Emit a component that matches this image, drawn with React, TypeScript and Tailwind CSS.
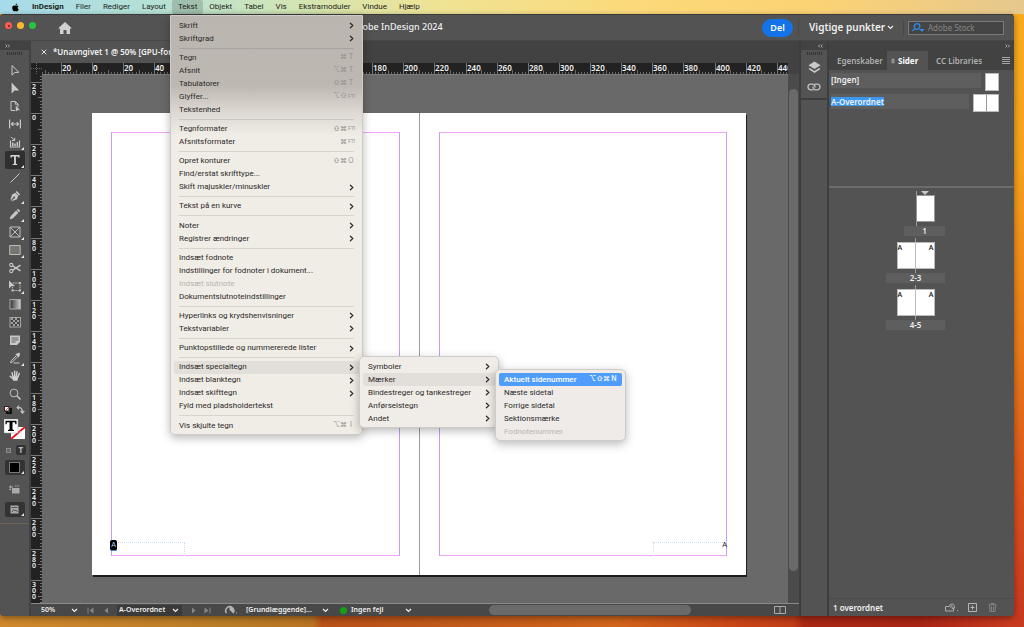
import React from "react";
import { FaApple } from "react-icons/fa";

/* ---------- data ---------- */

type Item = { label: string; mods?: string; keyName?: string; sub?: boolean; disabled?: boolean; active?: boolean; selected?: boolean };

const menuBar = ["Filer", "Rediger", "Layout", "Tekst", "Objekt", "Tabel", "Vis", "Ekstramoduler", "Vindue", "Hjælp"];

const textMenu: Item[][] = [
  [{ label: "Skrift", sub: true }, { label: "Skriftgrad", sub: true }],
  [
    { label: "Tegn", mods: "⌘", keyName: "T" },
    { label: "Afsnit", mods: "⌥⌘", keyName: "T" },
    { label: "Tabulatorer", mods: "⇧⌘", keyName: "T" },
    { label: "Glyffer...", mods: "⌥⇧", keyName: "F11" },
    { label: "Tekstenhed" },
  ],
  [
    { label: "Tegnformater", mods: "⇧⌘", keyName: "F11" },
    { label: "Afsnitsformater", mods: "⌘", keyName: "F11" },
  ],
  [
    { label: "Opret konturer", mods: "⇧⌘", keyName: "O" },
    { label: "Find/erstat skrifttype..." },
    { label: "Skift majuskler/minuskler", sub: true },
  ],
  [{ label: "Tekst på en kurve", sub: true }],
  [{ label: "Noter", sub: true }, { label: "Registrer ændringer", sub: true }],
  [
    { label: "Indsæt fodnote" },
    { label: "Indstillinger for fodnoter i dokument..." },
    { label: "Indsæt slutnote", disabled: true },
    { label: "Dokumentslutnoteindstillinger" },
  ],
  [{ label: "Hyperlinks og krydshenvisninger", sub: true }, { label: "Tekstvariabler", sub: true }],
  [{ label: "Punktopstillede og nummererede lister", sub: true }],
  [
    { label: "Indsæt specialtegn", sub: true, active: true },
    { label: "Indsæt blanktegn", sub: true },
    { label: "Indsæt skifttegn", sub: true },
    { label: "Fyld med pladsholdertekst" },
  ],
  [{ label: "Vis skjulte tegn", mods: "⌥⌘", keyName: "I" }],
];

const specialMenu: Item[][] = [
  [
    { label: "Symboler", sub: true },
    { label: "Mærker", sub: true, active: true },
    { label: "Bindestreger og tankestreger", sub: true },
    { label: "Anførselstegn", sub: true },
    { label: "Andet", sub: true },
  ],
];

const markerMenu: Item[][] = [
  [
    { label: "Aktuelt sidenummer", mods: "⌥⇧⌘", keyName: "N", selected: true },
    { label: "Næste sidetal" },
    { label: "Forrige sidetal" },
    { label: "Sektionsmærke" },
    { label: "Fodnotenummer", disabled: true },
  ],
];

/* ---------- small shared pieces ---------- */

function Chevron({ className = "" }: { className?: string }) {
  return (
    <svg className={`h-[5px] w-[7px] shrink-0 ${className}`} viewBox="0 0 7 5" fill="none" stroke="currentColor" strokeWidth="1.2">
      <path d="M1 1l2.5 2.5L6 1" />
    </svg>
  );
}

function DoubleChevron({ flip }: { flip?: boolean }) {
  return (
    <svg className={`h-[4px] w-[5px] ${flip ? "rotate-180" : ""}`} viewBox="0 0 5 4" fill="none" stroke="#bdbdbd" strokeWidth=".8" aria-hidden="true">
      <path d="M.5.500L2 2 .5 3.500M3 .500L4.500 2 3 3.500" />
    </svg>
  );
}

function MenuRow({ item }: { item: Item }) {
  const tone = item.selected
    ? "bg-[#4f9dfa] text-white font-medium"
    : item.disabled
      ? "text-[#b9b5b0]"
      : item.active
        ? "bg-[#e2deda] text-[#2c2a28]"
        : "text-[#2c2a28]";
  return (
    <li role="none" className="flex">
      <button
        role="menuitem"
        disabled={item.disabled}
        aria-haspopup={item.sub ? "menu" : undefined}
        className={`flex h-[13px] flex-1 items-center rounded-[2px] px-[5px] text-left whitespace-nowrap ${tone}`}
      >
        <span className="flex-1">{item.label}</span>
        {item.mods && (
          <span className={`flex items-center font-['Inter',sans-serif] ${item.selected ? "text-white" : "text-[#96918b]"}`}>
            {[...item.mods].map((m) => (
              <span key={m} className="w-[7px] text-center text-[7px]">{m}</span>
            ))}
            <span className={`w-[7px] pl-[1px] ${item.keyName === "F11" ? "text-[5px]" : "text-center text-[7px]"}`}>{item.keyName}</span>
          </span>
        )}
        {item.sub && (
          <svg className="h-[7px] w-[5px]" viewBox="0 0 5 7" fill="none" stroke="currentColor" strokeWidth="1.2" strokeLinecap="round">
            <path d="M1.400 1.200l2.400 2.300-2.400 2.300" />
          </svg>
        )}
      </button>
    </li>
  );
}

function Menu({ groups, className, label }: { groups: Item[][]; className: string; label: string }) {
  return (
    <ul role="menu" aria-label={label} className={`absolute flex flex-col border border-[#cfcbc6] px-[3px] pt-[3px] pb-[2px] font-['Roboto',sans-serif] text-[8px] shadow-[0_3px_10px_rgba(0,0,0,0.28)] ${className}`}>
      {groups.map((g, i) => (
        <React.Fragment key={i}>
          {i > 0 && (
            <li role="separator" className="mx-[5px] flex flex-1 items-center">
              <span className="h-px flex-1 bg-black/10" />
            </li>
          )}
          {g.map((it) => (
            <MenuRow key={it.label} item={it} />
          ))}
        </React.Fragment>
      ))}
    </ul>
  );
}

function Select({ label, value, className }: { label: string; value: string; className: string }) {
  return (
    <label className="flex items-center">
      <span className="sr-only">{label}</span>
      <select className={`appearance-none truncate bg-transparent outline-none ${className}`}>
        <option>{value}</option>
      </select>
      <Chevron />
    </label>
  );
}

/* ---------- rulers ---------- */

const STEP = 31.13;

function HorizontalRuler() {
  const marks = Array.from({ length: 25 }, (_, i) => i - 2);
  return (
    <svg className="h-[11px] min-w-0 flex-1 bg-[#222]" aria-hidden="true">
      {marks.map((m) => {
        const x = Math.round(50 + m * STEP);
        return (
          <g key={m}>
            <rect x={x} y="0" width="1" height="11" fill="#777" />
            {Array.from({ length: 9 }, (_, k) => {
              const h = k === 4 ? 4 : 2;
              return <rect key={k} x={Math.round(50 + m * STEP + (k + 1) * 3.113)} y={11 - h} width="1" height={h} fill="#666" />;
            })}
            {m > -2 && (
              <text x={x + 1} y="8" fill="#f0f0f0" fontSize="8" fontWeight="600" fontFamily="Noto Sans, sans-serif">
                {Math.abs(m * 20)}
              </text>
            )}
          </g>
        );
      })}
    </svg>
  );
}

function VerticalRuler() {
  const marks = Array.from({ length: 18 }, (_, i) => i - 2);
  return (
    <svg className="h-full w-[11px] shrink-0 bg-[#222]" aria-hidden="true">
      {marks.map((m) => {
        const y = Math.round(39 + m * STEP);
        return (
          <g key={m}>
            <rect x="0" y={y} width="11" height="1" fill="#777" />
            {Array.from({ length: 9 }, (_, k) => {
              const w = k === 4 ? 4 : 2;
              return <rect key={k} x={11 - w} y={Math.round(39 + m * STEP + (k + 1) * 3.113)} width={w} height="1" fill="#777" />;
            })}
            {m > -2 &&
              String(Math.abs(m * 20)).split("").map((d, k) => (
                <text key={k} x="1" y={y + 7 + k * 6} fill="#f0f0f0" fontSize="7" fontWeight="600" fontFamily="Noto Sans, sans-serif">
                  {d}
                </text>
              ))}
          </g>
        );
      })}
    </svg>
  );
}

/* ---------- tools ---------- */

const tools: { name: string; more?: boolean; active?: boolean; art: React.ReactNode }[] = [
  { name: "Markering", art: <path d="M3 1.5v9.6l2.7-2.6 4.2-.2z" fill="none" stroke="#c8c8c8" /> },
  { name: "Direkte markering", art: <path d="M2.6.6v11l3-3 4.6-.2z" fill="#c8c8c8" /> },
  {
    name: "Side",
    art: (
      <g>
        <path d="M6 10.5H2v-9h4.5L9 4v3M6.3 1.5V4.200H9" fill="none" stroke="#c8c8c8" />
        <path d="M6.800 5.500v6.300l1.600-1.500 2.600-.1z" fill="#c8c8c8" />
      </g>
    ),
  },
  {
    name: "Mellemrum",
    art: <path d="M.6 1.500v9M11.400 1.500v9M2.500 6h7M4.300 4.200L2.500 6l1.800 1.800M7.700 4.200L9.500 6 7.700 7.800" fill="none" stroke="#c8c8c8" strokeWidth="1.200" />,
  },
  {
    name: "Indholdssamler",
    more: true,
    art: (
      <g>
        <path d="M1.500 4.500v6.500h9V4.500" fill="none" stroke="#c8c8c8" strokeWidth="1.200" />
        <path d="M3 6.500h1.500v3.500H3zM5.300 7.500h1.500V10H5.300zM7.600 6h1.500v4H7.600z" fill="#c8c8c8" />
        <path d="M2 .8l3.500 3.500M5.700 1.800v2.700H3" fill="none" stroke="#c8c8c8" />
      </g>
    ),
  },
  { name: "Tekst", more: true, active: true, art: <path d="M1.500 1h9v2.700h-1l-.4-1.300H6.900v7.400l1.400.4v.8H3.700v-.8l1.400-.4V2.400H2.900l-.4 1.300h-1z" fill="#d8d8d8" /> },
  { name: "Streg", art: <path d="M1.500 10.500l9-9" stroke="#c8c8c8" /> },
  {
    name: "Pen",
    more: true,
    art: <path d="M7.500.800l3.700 3.700-1.300.9-3-3zM6.200 2.700l3.100 3.100-1.400 3.400-6 2.200 3-3a1 1 0 10-.7-.7l-3 3 1.800-6z" fill="#c8c8c8" />,
  },
  { name: "Blyant", more: true, art: <path d="M9 .8l2.200 2.200-1.200 1.200L7.800 2zM7.200 2.600l2.200 2.200-5.700 5.600-2.900.8.800-2.900z" fill="#c8c8c8" /> },
  { name: "Rektangelramme", more: true, art: <path d="M1 1h10v10H1zM1 1l10 10M11 1L1 11" fill="none" stroke="#bdbdbd" /> },
  { name: "Rektangel", more: true, art: <path d="M.7 1.500h10.500v9H.7z" fill="#777571" stroke="#bdbdbd" /> },
  {
    name: "Saks",
    art: (
      <g fill="none" stroke="#c8c8c8" strokeWidth="1.100">
        <circle cx="2.300" cy="3" r="1.600" />
        <circle cx="2.300" cy="9" r="1.600" />
        <path d="M3.700 3.900L11.500 8.800M3.700 8.100L11.500 3.200" strokeWidth="1.400" />
      </g>
    ),
  },
  {
    name: "Fri transformering",
    more: true,
    art: (
      <g>
        <path d="M4 3h7v7.500H3.500V7" fill="none" stroke="#bdbdbd" strokeDasharray="1.500 .7" />
        <path d="M10 2h2v2h-2zM10 9.500h2v2h-2zM2.500 9.500h2v2h-2z" fill="#bdbdbd" />
        <path d="M0 .5v8l2.400-2.200 3.600-.2z" fill="#c8c8c8" />
      </g>
    ),
  },
  {
    name: "Farveforløb",
    art: (
      <g>
        <defs>
          <linearGradient id="grad">
            <stop offset="0" stopColor="#333" />
            <stop offset="1" stopColor="#d0d0d0" />
          </linearGradient>
        </defs>
        <rect x="1" y="1.500" width="10.500" height="9.500" fill="url(#grad)" stroke="#a8a8a8" />
      </g>
    ),
  },
  {
    name: "Farveforløbsudtyndning",
    art: (
      <g>
        <rect x="1" y="1.500" width="10.500" height="9.500" fill="#444" stroke="#a8a8a8" />
        <path d="M2 2h2v2H2zM6 2h2v2H6zM4 4h2v2H4zM8 4h2v2H8zM2 6h2v2H2zM6 6h2v2H6zM4 8h2v2H4zM8 8h2v2H8z" fill="#a0a0a0" />
      </g>
    ),
  },
  {
    name: "Note",
    art: (
      <g>
        <path d="M1 1.500h10v6.500L8 11H1z" fill="#c8c8c8" />
        <path d="M2.500 4h7M2.500 6h7M2.500 8h4" stroke="#5a5a5a" strokeWidth=".9" />
      </g>
    ),
  },
  {
    name: "Pipette",
    more: true,
    art: (
      <g>
        <path d="M8 1.800c1-1.200 2-1.300 2.700-.6s.6 1.700-.6 2.700l.4.500-1 1-3-3 1-1z" fill="#c8c8c8" />
        <path d="M7 4L2.200 8.800 1.500 10.700l2-.7L8.200 5.200" fill="none" stroke="#c8c8c8" />
        <path d="M4.500 11h6" stroke="#c8c8c8" />
      </g>
    ),
  },
  {
    name: "Hånd",
    art: (
      <g fill="none" stroke="#d0d0d0" strokeLinecap="round" strokeWidth="1.400">
        <path d="M4 6.500L3 2.800M5.700 6V1.300M7.400 6L8 1.800M8.800 7l1.500-3.500M3.500 8.500L1.200 6.300" />
        <path d="M4.500 7l3.700.2-.5 2.600H5z" fill="#d0d0d0" strokeWidth="2" />
      </g>
    ),
  },
  {
    name: "Zoom",
    art: (
      <g fill="none" stroke="#bdbdbd">
        <circle cx="5" cy="5" r="3.900" />
        <path d="M7.800 7.800l3.700 3.700" strokeWidth="1.600" />
      </g>
    ),
  },
];

function Corner() {
  return (
    <svg className="absolute right-[1px] bottom-[1px] h-[3px] w-[3px]" viewBox="0 0 3 3" aria-hidden="true">
      <path d="M3 0v3H0z" fill="#e8e8e8" />
    </svg>
  );
}

function Toolbar() {
  return (
    <aside className="flex w-[31px] shrink-0 flex-col border-r-2 border-[#424242] bg-[#535353]">
      <div className="flex h-[9px] items-center bg-[#424242] pl-[5px]"><DoubleChevron /></div>
      <Grip className="mx-[7px] mt-[2px]" />
      <div className="mt-[6px] flex flex-col items-center">
        {tools.map((t) => (
          <button
            key={t.name}
            aria-label={t.name}
            className={`relative flex h-[18px] w-[20px] items-center justify-center rounded-[2px] ${t.active ? "bg-[#2f2f2f]" : ""}`}
          >
            <svg className="h-[12px] w-[12px]" viewBox="0 0 12 12">{t.art}</svg>
            {t.more && <Corner />}
          </button>
        ))}
      </div>
      <div className="flex items-center justify-between px-[4px] pt-[2px]">
        <button aria-label="Standardudfyldning og -streg">
          <svg className="h-[8px] w-[8px]" viewBox="0 0 8 8">
            <rect x="3" y="3" width="4" height="4" fill="none" stroke="#111" strokeWidth="2" />
            <rect x=".5" y=".5" width="4.500" height="4.500" fill="#fff" stroke="#222" />
            <path d="M1 5l4-4" stroke="#e33" strokeWidth=".8" />
          </svg>
        </button>
        <button aria-label="Byt udfyldning og streg">
          <svg className="h-[9px] w-[9px]" viewBox="0 0 9 9" fill="none" stroke="#c0c0c0" strokeWidth="1.200">
            <path d="M1.500 2.500c3-.5 5 1 5 5M3 .6L1.200 2.500 3 4.200M4.700 6l1.800 2L8.300 6" />
          </svg>
        </button>
      </div>
      <button aria-label="Udfyldning og streg" className="mt-[5px] ml-[4px]">
        <svg className="h-[21px] w-[22px]" viewBox="0 0 22 21">
          <rect x="7" y="8" width="14" height="12" fill="#fff" />
          <path d="M7 20L21 8" stroke="#e8121c" strokeWidth="1.800" />
          <path d="M13 18l4-6v6" fill="none" stroke="#ddd" strokeWidth=".6" />
          <rect x="0" y="0" width="14" height="14" fill="#fff" stroke="#999" strokeWidth=".5" />
          <path d="M1.500 1.800h11v3.500h-1l-.6-2H8.500v7.200l1.500.5v1H4v-1l1.500-.5V3.300H3.100l-.6 2h-1z" fill="#000" />
        </svg>
      </button>
      <div className="mt-[5px] flex justify-around px-[2px]">
        <button aria-label="Formatering påvirker beholder" className="flex h-[10px] w-[10px] items-center justify-center">
          <span className="h-[5px] w-[5px] border border-[#8a8a8a] bg-[#666]" />
        </button>
        <button aria-label="Formatering påvirker tekst" className="flex h-[10px] w-[10px] items-center justify-center rounded-[2px] bg-[#333] font-['Noto_Sans',sans-serif] text-[8px] leading-none font-bold text-[#bbb]">T</button>
      </div>
      <button aria-label="Anvend farve" className="relative mx-auto mt-[5px] flex h-[15px] w-[20px] items-center justify-center rounded-[2px] bg-[#333]">
        <span className="h-[11px] w-[11px] border border-[#777] bg-black" />
        <Corner />
      </button>
      <button aria-label="Visningsindstillinger" className="mx-auto mt-[10px]">
        <svg className="h-[9px] w-[11px]" viewBox="0 0 11 9">
          <path d="M0 2h4M1.500.500v3M0 4.500h2M6 1h1.500M8.500 1h1.500" stroke="#aaa" />
          <rect x="3" y="3" width="7.500" height="5.500" fill="#aaa" />
        </svg>
      </button>
      <button aria-label="Skærmtilstand" className="relative mx-auto mt-[8px] flex h-[15px] w-[20px] items-center justify-center rounded-[2px] bg-[#333]">
        <svg className="h-[9px] w-[9px]" viewBox="0 0 9 9">
          <rect x=".5" y=".5" width="8" height="8" fill="#aaa" />
          <path d="M1.500 2.500h6M2 7l1.500-2.500L5 6l1-1 1.500 2" fill="none" stroke="#4a4a4a" strokeWidth=".9" />
        </svg>
        <Corner />
      </button>
      <div className="mt-[6px] h-px bg-[#6e665c]" />
    </aside>
  );
}

function Grip({ className }: { className: string }) {
  return <div className={`h-[3px] bg-[repeating-linear-gradient(90deg,#333_0_1px,#535353_1px_2px)] ${className}`} />;
}

/* ---------- document ---------- */

function Page({ side }: { side: "left" | "right" }) {
  const left = side === "left";
  return (
    <div className={`flex-1 bg-white px-[19px] py-[19px] ${left ? "border-r border-[#9b9b9b]" : ""}`}>
      <div className="relative h-full border border-x-[#c69df0] border-y-[#f2a5f5]">
        <div className={`absolute bottom-[-1px] h-[14px] w-[74px] border border-b-0 border-dotted border-[#ccdcf4] ${left ? "left-[-1px] border-l-0" : "right-[-1px] border-r-0"}`} />
        {left ? (
          <span className="absolute bottom-[4px] left-[-2px] flex h-[11px] w-[7px] items-center justify-center rounded-[2px] border-b border-[#3a8ee6] bg-black font-['Liberation_Sans',sans-serif] text-[7px] text-[#a8d4ff]">A</span>
        ) : (
          <span className="absolute right-[-1px] bottom-[5px] font-['Liberation_Sans',sans-serif] text-[7px] leading-[10px] text-[#222]">A</span>
        )}
      </div>
    </div>
  );
}

function StatusBar() {
  const nav = "h-[7px] w-[7px]";
  return (
    <footer className="flex h-[13px] shrink-0 items-center border-t border-[#8a8a8a] bg-[#484848] text-[7px] font-semibold text-[#f0f0f0]">
      <div className="flex flex-1 items-center">
        <div className="flex w-[49px] pl-[10px]">
          <Select label="Zoom" value="50%" className="w-[30px]" />
        </div>
        <div className="ml-[7px] flex flex-1 items-center">
          <button aria-label="Første side" className="w-[16px]">
            <svg className={nav} viewBox="0 0 7 7" fill="#858585"><path d="M.5.500h1v6h-1zM6.500.500v6L2.500 3.500z" /></svg>
          </button>
          <button aria-label="Forrige side" className="w-[14px]">
            <svg className={nav} viewBox="0 0 7 7" fill="#858585"><path d="M5 .500v6L1.500 3.500z" /></svg>
          </button>
          <div className="flex h-[11px] w-[65px] items-center bg-[#3a3a3a] pl-[2px]">
            <Select label="Side" value="A-Overordnet" className="w-[53px]" />
          </div>
          <button aria-label="Næste side" className="ml-[8px] w-[14px]">
            <svg className={nav} viewBox="0 0 7 7" fill="#858585"><path d="M2 .500v6l3.500-3z" /></svg>
          </button>
          <button aria-label="Sidste side" className="w-[20px]">
            <svg className={nav} viewBox="0 0 7 7" fill="#858585"><path d="M5.500.500h1v6h-1zM.5.500v6l4-3z" /></svg>
          </button>
          <svg className="h-[10px] w-[14px]" viewBox="0 0 14 10">
            <path d="M2.500 8A4 4 0 119 8" fill="none" stroke="#b5b5b5" strokeWidth="1.500" />
            <path d="M5.500 5V1.500A4 4 0 019 8z" fill="#b5b5b5" />
            <path d="M12 8h1" stroke="#b5b5b5" />
          </svg>
          <div className="ml-[8px]">
            <Select label="Preflightprofil" value="[Grundlæggende]..." className="w-[76px]" />
          </div>
          <span className="ml-[11px] h-[7px] w-[7px] rounded-full bg-[#14a014]" />
          <div className="ml-[4px]">
            <Select label="Preflight" value="Ingen fejl" className="w-[54px]" />
          </div>
        </div>
      </div>
      <div className="flex h-full w-[285px] items-center">
        <div className="h-[10px] w-[202px] rounded-full bg-[#6a6a6a]" />
      </div>
      <button aria-label="Opdel layoutvisning" className="mr-[13px]">
        <svg className="h-[8px] w-[12px]" viewBox="0 0 12 8" fill="none" stroke="#aaa"><path d="M.5.500h11v7H.500zM6 .500v7" /></svg>
      </button>
    </footer>
  );
}

function DocumentArea() {
  return (
    <main className="flex min-w-0 flex-1 flex-col bg-[#424242]">
      <div className="flex h-[22px] shrink-0">
        <div className="flex items-center gap-[6px] bg-[#535353] pr-[12px] pl-[10px] text-[8px] font-semibold text-[#f2f2f2]">
          <button aria-label="Luk dokument">
            <svg className="h-[6px] w-[6px]" viewBox="0 0 6 6" stroke="#ddd"><path d="M.7.700l4.600 4.600M5.300.700L.7 5.300" /></svg>
          </button>
          <span className="whitespace-nowrap">*Unavngivet 1 @ 50% [GPU-forhåndsvisning]</span>
        </div>
      </div>
      <div className="flex h-[11px] shrink-0">
        <svg className="h-[11px] w-[11px] bg-[#222]" viewBox="0 0 11 11" stroke="#666" strokeDasharray="1 1"><path d="M0 5.500h11M5.500 0v11" /></svg>
        <HorizontalRuler />
        <div className="w-[11px]" />
      </div>
      <div className="flex min-h-0 flex-1">
        <VerticalRuler />
        <div className="min-w-0 flex-1 overflow-hidden border-t border-[#7a7a7a] bg-[#696969] pt-[38px] pl-[50px]">
          <div className="flex h-[462px] w-[654px] shadow-[1px_2px_0_#1c1c1c]">
            <Page side="left" />
            <Page side="right" />
          </div>
        </div>
        <div className="w-[11px] bg-[#4b4b4b] px-[1px] pt-[15px]">
          <div className="h-[482px] rounded-full bg-[#6a6a6a]" />
        </div>
      </div>
      <StatusBar />
    </main>
  );
}

/* ---------- right-hand panels ---------- */

function Dock() {
  return (
    <nav aria-label="Paneler" className="flex w-[30px] shrink-0 flex-col border-x-2 border-[#3e3e3e] bg-[#535353]">
      <div className="flex h-[9px] items-center justify-end bg-[#424242] pr-[4px]"><DoubleChevron flip /></div>
      <div className="flex flex-col items-center border-b-2 border-[#3e3e3e] pb-[7px]">
        <Grip className="mt-[2px] w-[15px]" />
        <button aria-label="Lag" className="mt-[6px]">
          <svg className="h-[13px] w-[13px]" viewBox="0 0 13 13" fill="#c8c8c8">
            <path d="M6.500.500l6 3.700-6 3.700-6-3.700z" />
            <path d="M1.800 7L.5 8l6 4 6-4-1.300-1-4.700 3z" />
          </svg>
        </button>
        <button aria-label="Kæder" className="mt-[9px]">
          <svg className="h-[8px] w-[14px]" viewBox="0 0 14 8" fill="none" stroke="#c0c0c0" strokeWidth="1.300" strokeLinecap="round">
            <path d="M6 6.800H3.800a2.800 2.800 0 010-5.600h1.400a2.800 2.800 0 012.800 2.800" />
            <path d="M8 1.200h2.200a2.800 2.800 0 010 5.600H8.800A2.800 2.800 0 016 4" />
          </svg>
        </button>
      </div>
    </nav>
  );
}

function Spread({ label, pair }: { label: string; pair?: boolean }) {
  return (
    <li className={`flex h-[47px] flex-col ${pair ? "items-center" : "items-end"}`}>
      <div className={`flex h-[35px] bg-[linear-gradient(#9a9a9a,#9a9a9a)] bg-size-[1px_100%] bg-no-repeat py-[4px] ${pair ? "bg-center" : "mr-[10px] bg-left"}`}>
        {pair && <span className="flex w-[19px] justify-start border border-[#bbb] bg-white font-['Open_Sans',sans-serif] text-[7px] leading-[10px] font-semibold text-[#111]">A</span>}
        <span className={`flex w-[19px] justify-end border bg-white font-['Open_Sans',sans-serif] text-[7px] leading-[10px] font-semibold text-[#111] ${pair ? "border-l-0 border-[#bbb]" : "border-[#999]"}`}>{pair ? "A" : ""}</span>
      </div>
      <span className={`flex h-[10px] items-center justify-center bg-[#5e5e5e] text-[8px] leading-none font-semibold text-[#eee] ${pair ? "w-full" : "w-[41px]"}`}>{label}</span>
    </li>
  );
}

function PagesPanel() {
  return (
    <section className="flex w-[185px] shrink-0 flex-col bg-[#535353]">
      <div className="flex h-[10px] items-center justify-end bg-[#424242] pr-[4px]"><DoubleChevron /></div>
      <div role="tablist" className="flex h-[19px] bg-[#424242] text-[8px] font-semibold text-[#b0b0b0]">
        <button role="tab" aria-selected="false" className="w-[58px] overflow-hidden pl-[8px] text-left">Egenskaber</button>
        <button role="tab" aria-selected="true" className="flex w-[41px] items-center gap-[3px] bg-[#535353] pl-[4px] font-bold text-white">
          <svg className="h-[6px] w-[4px]" viewBox="0 0 4 6" fill="none" stroke="#bbb" strokeWidth=".8"><path d="M.5 2.200L2 .700l1.500 1.500zM.5 3.800L2 5.300l1.500-1.500z" /></svg>
          Sider
        </button>
        <button role="tab" aria-selected="false" className="ml-[8px] w-[49px] overflow-hidden text-left whitespace-nowrap">CC Libraries</button>
        <button aria-label="Panelmenu" className="ml-auto pr-[4px]">
          <svg className="h-[7px] w-[8px]" viewBox="0 0 8 7" stroke="#a5a5a5"><path d="M0 .500h8M0 2.500h8M0 4.500h8M0 6.500h8" /></svg>
        </button>
      </div>
      <ul className="flex h-[116px] flex-col gap-[3px] pt-[3px] pr-[15px] pl-[2px] text-[8px] font-semibold text-[#f0f0f0]">
        <li className="flex h-[18px] items-start justify-between gap-[4px]">
          <span className="h-[15px] flex-1 bg-[#5e5e5e] leading-[14px]">[Ingen]</span>
          <span className="h-full w-[14px] border border-[#bbb] bg-white" />
        </li>
        <li className="flex h-[18px] items-start justify-between gap-[4px]">
          <span className="flex h-[15px] flex-1 items-center bg-[#5e5e5e]">
            <span className="bg-[#3b97f0] leading-[9px]">A-Overordnet</span>
          </span>
          <span className="flex h-full w-[26px] border border-[#bbb] bg-white">
            <span className="flex-1 border-r border-[#999]" />
            <span className="flex-1" />
          </span>
        </li>
      </ul>
      <div className="h-[2px] bg-[#6c6c6c]" />
      <ul className="relative mt-[3px] ml-[57px] flex w-[59px] flex-col">
        <li aria-hidden="true" className="absolute top-0 right-[16px]">
          <svg className="h-[4px] w-[8px]" viewBox="0 0 8 4"><path d="M0 0h8L4 4z" fill="#c8c8c8" /></svg>
        </li>
        <Spread label="1" />
        <Spread label="2-3" pair />
        <Spread label="4-5" pair />
      </ul>
      <div className="mt-auto flex h-[18px] items-center border-t border-[#4b4b4b] pr-[17px] pl-[4px] text-[8px] font-semibold text-[#f0f0f0]">
        <span className="flex-1 whitespace-nowrap">1 overordnet</span>
        <button aria-label="Rediger sidestørrelse" className="mr-[10px]">
          <svg className="h-[9px] w-[13px]" viewBox="0 0 13 9" fill="none" stroke="#aaa"><path d="M4 3.500H.500v4.500h8V6M4.500 3a2.500 2.500 0 014.600-.800l.4 3-2.500.3zM5 1l4 5M12 7.500h1" /></svg>
        </button>
        <button aria-label="Opret ny side" className="mr-[11px]">
          <svg className="h-[9px] w-[9px]" viewBox="0 0 9 9" fill="none" stroke="#b5b5b5"><path d="M.5.500h8v8h-8zM4.500 2.500v4M2.500 4.500h4" /></svg>
        </button>
        <button aria-label="Slet side">
          <svg className="h-[9px] w-[9px]" viewBox="0 0 9 9" fill="none" stroke="#858585"><path d="M.5 1.800h8M3 1.500V.500h3v1M1.500 2l.5 6.500h5l.5-6.500M3.500 3.500v4M5.500 3.500v4" /></svg>
        </button>
      </div>
    </section>
  );
}

/* ---------- window ---------- */

function TitleBar() {
  return (
    <header className="flex h-[26px] shrink-0 items-center border-b border-[#484848] bg-[#535353] text-[#f0f0f0]">
      <div className="mb-[4px] flex gap-[5px] pl-[5px]">
        <button aria-label="Luk" className="flex h-[7px] w-[7px] items-center justify-center rounded-full bg-[#fc5b50]">
          <span className="h-[2px] w-[2px] rounded-full bg-[#7a1410]" />
        </button>
        <button aria-label="Minimer" className="h-[7px] w-[7px] rounded-full bg-[#fdb92c]" />
        <button aria-label="Maksimer" className="h-[7px] w-[7px] rounded-full bg-[#27c440]" />
      </div>
      <button aria-label="Hjem" className="ml-[22px]">
        <svg className="h-[12px] w-[14px]" viewBox="0 0 14 12" fill="#d0d0d0"><path d="M7 0l7 6.500h-2V12H8.500V8h-3v4H2V6.500H0z" /></svg>
      </button>
      <h1 className="mb-[2px] ml-[279px] flex-1 text-[9px] font-medium whitespace-nowrap">Adobe InDesign 2024</h1>
      <button className="h-[18px] w-[31px] rounded-full bg-[#1473e6] text-[9px] font-semibold text-white">Del</button>
      <div className="ml-[5px] flex h-[15px] items-center border-x border-[#484848] pr-[9px] pl-[10px] text-[10px] font-semibold">
        <Select label="Arbejdsområde" value="Vigtige punkter" className="w-[78px]" />
      </div>
      <label className="mr-[10px] ml-[4px] flex h-[14px] w-[96px] items-center gap-[4px] border border-[#7a7a7a] bg-[#454545] pl-[3px]">
        <svg className="h-[9px] w-[12px] shrink-0" viewBox="0 0 12 9" fill="none" stroke="#2d8ceb" strokeWidth="1.200">
          <circle cx="5" cy="3.500" r="2.800" />
          <path d="M3 5.500L.5 8M8.500 6.500h3L10 8z" />
        </svg>
        <span className="sr-only">Søg i Adobe Stock</span>
        <input type="search" placeholder="Adobe Stock" className="w-full min-w-0 bg-transparent text-[8px] outline-none placeholder:text-[#858585]" />
      </label>
    </header>
  );
}

export default function App() {
  return (
    <div className="relative flex h-screen flex-col overflow-hidden bg-[linear-gradient(90deg,#d0882c_0%,#b97c26_22%,#b97422_30.500%,#b85018_31.500%,#c25a1a_45%,#d0641a_60%,#c94516_72%,#c03c16_77.500%,#a82814_78.500%,#a82414_90%,#c83a20_99%)] font-['Noto_Sans',sans-serif]">
      <nav aria-label="Menulinje" className="flex h-[14px] shrink-0 items-stretch bg-[linear-gradient(90deg,#a6dbea_0%,#b5e0d4_15%,#cfe5b8_27%,#efe394_43%,#fcd97a_62%,#fbd274_80%,#e6c88e_100%)] pl-[10px] font-['Roboto',sans-serif] text-[8px] text-[#1d1d1b]">
        <button aria-label="Apple" className="flex w-[16px] items-center">
          <FaApple className="h-[9px] w-[11px] text-black" />
        </button>
        <button className="px-[6px] font-bold">InDesign</button>
        {menuBar.map((m) => (
          <button key={m} className={`px-[6px] ${m === "Tekst" ? "rounded-[2px] bg-black/15" : ""}`}>{m}</button>
        ))}
      </nav>
      <div className="flex min-h-0 flex-1 bg-[linear-gradient(#f9ab1e_0%,#f6a01c_25%,#e87a18_55%,#d8501c_80%,#c83a20_97%)] bg-size-[11px_100%] bg-right bg-no-repeat pr-[10px] pb-[11px]">
        <div className="flex min-w-0 flex-1 flex-col overflow-hidden rounded-[4px] border-t border-[#3a3a3a] bg-[#535353] shadow-[0_2px_6px_rgba(0,0,0,0.4)]">
          <TitleBar />
          <div className="flex min-h-0 flex-1">
            <Toolbar />
            <DocumentArea />
            <Dock />
            <PagesPanel />
          </div>
        </div>
      </div>
      <Menu
        label="Tekst"
        groups={textMenu}
        className="top-[15px] left-[170px] h-[420px] w-[193px] rounded-b-[5px] bg-[linear-gradient(#bab5af_0,#bdb8b2_70px,#dcd7d1_95px,#f0ece6_120px)]"
      />
      <Menu label="Indsæt specialtegn" groups={specialMenu} className="top-[356px] left-[359px] w-[140px] rounded-[5px] bg-[#f0ece7]" />
      <Menu label="Mærker" groups={markerMenu} className="top-[369px] left-[495px] w-[131px] rounded-[5px] bg-[#eeebe8]" />
    </div>
  );
}
